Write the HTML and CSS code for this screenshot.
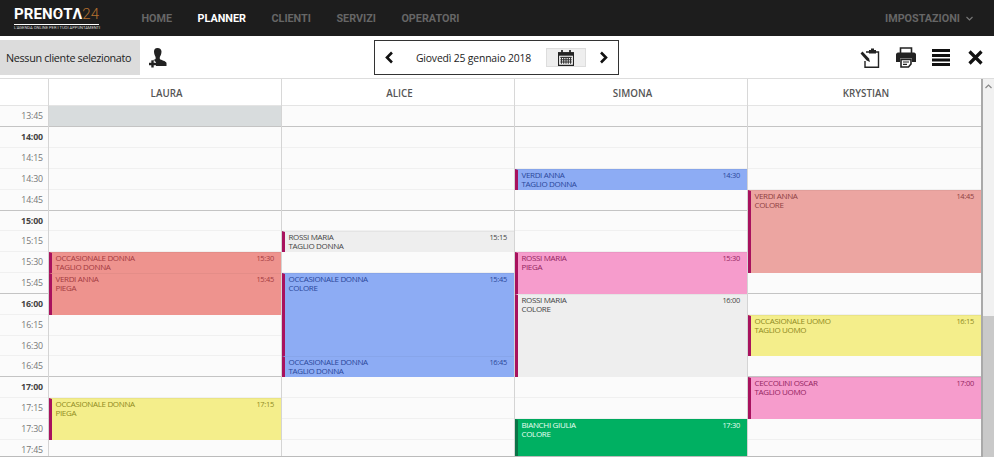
FILE: index.html
```html
<!DOCTYPE html>
<html lang="it">
<head>
    <meta charset="UTF-8">
    <meta name="viewport" content="width=device-width, initial-scale=1.0">
    <title>Prenota24 - Planner</title>
    <link rel="stylesheet" href="styles.css">
</head>
<body>
    <header class="topbar">
        <div class="logo">
            <div class="logo-name">PREN<span class="logo-o">O</span>TΛ<span class="logo-num">24</span></div>
            <div class="logo-tag">L'AGENDA ONLINE PER I TUOI APPUNTAMENTI</div>
        </div>
        <nav class="nav">
            <a>HOME</a>
            <a class="active">PLANNER</a>
            <a>CLIENTI</a>
            <a>SERVIZI</a>
            <a>OPERATORI</a>
        </nav>
        <a class="settings">IMPOSTAZIONI
            <svg width="7" height="5" viewBox="0 0 7 5"><path d="M.5 1 3.5 4 6.5 1" fill="none" stroke="#777" stroke-width="1.2"/></svg>
        </a>
    </header>

    <div class="toolbar">
        <div class="client">
            <div class="client-name">Nessun cliente selezionato</div>
            <svg class="icon" width="19" height="20" viewBox="0 0 19 20">
                <path d="M9.5 0C7 0 6 1.600 6 3.600 6 5.800 7 8 7.600 9V11C6 12 2.500 12.500 1.800 14V18H18.500V15C18 13 13 12 11.800 11V9C12.500 8 13.500 5.800 13.500 3.600 13.500 1.600 12 0 9.500 0Z" fill="#222"/>
                <path d="M4.500 12.500V19.500M1 16H8" stroke="#fff" stroke-width="4.600"/>
                <path d="M4.500 12.500V19.500M1 16H8" stroke="#222" stroke-width="2.400"/>
            </svg>
        </div>
        <div class="datebox">
            <svg width="10" height="13" viewBox="0 0 10 13"><path d="M8 1.500 3 6.500 8 11.500" fill="none" stroke="#111" stroke-width="2.600"/></svg>
            <span class="date">Giovedì 25 gennaio 2018</span>
            <button class="cal-btn">
                <svg width="16" height="16" viewBox="0 0 14 14">
                    <path d="M.5 2.500H13.500V13.500H.5Z" fill="#fff" stroke="#222"/>
                    <path d="M0 2H14V5H0Z" fill="#222"/>
                    <path d="M3.500 0V3M10.500 0V3" stroke="#222" stroke-width="1.500"/>
                    <path d="M2 6.500H12M2 8.500H12M2 10.500H12M3 6V12M5 6V12M7 6V12M9 6V12M11 6V12" stroke="#333" stroke-width="1"/>
                </svg>
            </button>
            <svg width="10" height="13" viewBox="0 0 10 13"><path d="M2 1.500 7 6.500 2 11.500" fill="none" stroke="#111" stroke-width="2.600"/></svg>
        </div>
        <div class="actions">
            <svg width="20" height="20" viewBox="0 0 20 20">
                <path d="M6 4H18.500V19.300H5V13" fill="none" stroke="#222" stroke-width="1.400"/>
                <path d="M9 4V2H11V.5H14V2H16V5.500H9Z" fill="#222"/>
                <path d="M.5 5.500 2.500 3.500 9 10.500 10 14 6.700 12.500Z" fill="#222"/>
            </svg>
            <svg width="20" height="21" viewBox="0 0 20 21">
                <path d="M4.500 6V1H15.500V6" fill="none" stroke="#222" stroke-width="1.600"/>
                <path d="M2 5.500H18C19 5.500 20 6.500 20 7.500V15H16V11.500H4V15H0V7.500C0 6.500 1 5.500 2 5.500Z" fill="#222"/>
                <path d="M5 12.500H15V17L12.500 20H5Z" fill="#fff" stroke="#222" stroke-width="1.600"/>
                <path d="M7 15H13M7 17.300H11" stroke="#222" stroke-width="1.200"/>
            </svg>
            <svg width="18" height="17" viewBox="0 0 18 17">
                <path d="M0 1.500H18M0 6.500H18M0 11H18M0 15.500H18" stroke="#111" stroke-width="3"/>
            </svg>
            <svg class="close" width="15" height="15" viewBox="0 0 15 15">
                <path d="M1.500 1.500 13.500 13.500M13.500 1.500 1.500 13.500" stroke="#111" stroke-width="3.200"/>
            </svg>
        </div>
    </div>

    <div class="board">
        <div class="board-main">
            <div class="head">
                <div></div>
                <div class="head-cell">LAURA</div>
                <div class="head-cell">ALICE</div>
                <div class="head-cell">SIMONA</div>
                <div class="head-cell">KRYSTIAN</div>
            </div>
            <div class="calendar">
                <div class="slots">
                    <div class="slot"><span class="time">13:45</span></div>
                    <div class="slot hour"><span class="time">14:00</span></div>
                    <div class="slot"><span class="time">14:15</span></div>
                    <div class="slot"><span class="time">14:30</span></div>
                    <div class="slot"><span class="time">14:45</span></div>
                    <div class="slot hour"><span class="time">15:00</span></div>
                    <div class="slot"><span class="time">15:15</span></div>
                    <div class="slot"><span class="time">15:30</span></div>
                    <div class="slot"><span class="time">15:45</span></div>
                    <div class="slot hour"><span class="time">16:00</span></div>
                    <div class="slot"><span class="time">16:15</span></div>
                    <div class="slot"><span class="time">16:30</span></div>
                    <div class="slot"><span class="time">16:45</span></div>
                    <div class="slot hour"><span class="time">17:00</span></div>
                    <div class="slot"><span class="time">17:15</span></div>
                    <div class="slot"><span class="time">17:30</span></div>
                    <div class="slot"><span class="time">17:45</span></div>
                </div>

                <div class="col-line laura"></div>
                <div class="col-line alice"></div>
                <div class="col-line simona"></div>
                <div class="col-line krystian"></div>

                <div class="closed laura r1"></div>

                <div class="event red laura r8 s1">
                    <div>OCCASIONALE DONNA<br>TAGLIO DONNA</div><span class="at">15:30</span>
                </div>
                <div class="event red laura r9 s2">
                    <div>VERDI ANNA<br>PIEGA</div><span class="at">15:45</span>
                </div>
                <div class="event yellow laura r15 s2">
                    <div>OCCASIONALE DONNA<br>PIEGA</div><span class="at">17:15</span>
                </div>

                <div class="event grey alice r7 s1">
                    <div>ROSSI MARIA<br>TAGLIO DONNA</div><span class="at">15:15</span>
                </div>
                <div class="event blue alice r9 s4">
                    <div>OCCASIONALE DONNA<br>COLORE</div><span class="at">15:45</span>
                </div>
                <div class="event blue alice r13 s1">
                    <div>OCCASIONALE DONNA<br>TAGLIO DONNA</div><span class="at">16:45</span>
                </div>

                <div class="event blue simona r4 s1">
                    <div>VERDI ANNA<br>TAGLIO DONNA</div><span class="at">14:30</span>
                </div>
                <div class="event pink simona r8 s2">
                    <div>ROSSI MARIA<br>PIEGA</div><span class="at">15:30</span>
                </div>
                <div class="event grey simona r10 s4">
                    <div>ROSSI MARIA<br>COLORE</div><span class="at">16:00</span>
                </div>
                <div class="event green simona r16 s2">
                    <div>BIANCHI GIULIA<br>COLORE</div><span class="at">17:30</span>
                </div>

                <div class="event salmon krystian r5 s4">
                    <div>VERDI ANNA<br>COLORE</div><span class="at">14:45</span>
                </div>
                <div class="event yellow krystian r11 s2">
                    <div>OCCASIONALE UOMO<br>TAGLIO UOMO</div><span class="at">16:15</span>
                </div>
                <div class="event pink krystian r14 s2">
                    <div>CECCOLINI OSCAR<br>TAGLIO UOMO</div><span class="at">17:00</span>
                </div>
            </div>
        </div>
        <div class="scrollbar">
            <svg class="scroll-up" width="7" height="5" viewBox="0 0 7 5"><path d="M.5 4 3.500 1 6.500 4" fill="none" stroke="#888" stroke-width="1.200"/></svg>
            <div class="scroll-thumb"></div>
        </div>
    </div>
</body>
</html>
```

FILE: styles.css
```css
html, body {
    margin: 0;
    padding: 0;
    height: 457px;
    overflow: hidden;
}
body {
    font-family: 'Open Sans', 'Liberation Sans', sans-serif;
    background-color: #ffffff;
    color: #333;
    display: flex;
    flex-direction: column;
}

/* top bar */
.topbar {
    flex: none;
    height: 36px;
    background: #1d1d1d;
    display: flex;
    align-items: center;
    font-family: Roboto, 'Liberation Sans', sans-serif;
    font-weight: 700;
    font-size: 10.8px;
    color: #666;
}
.logo {
    width: 127px;
    padding-left: 14px;
    box-sizing: border-box;
    color: #fff;
}
.logo-name {
    width: 85px;
    font-size: 15px;
    line-height: 15px;
    letter-spacing: .1px;
    border-bottom: 1px solid #fff;
    padding-bottom: 2px;
    white-space: nowrap;
    margin-top: 1px;
}
.logo-o {
    position: relative;
}
.logo-o::after {
    content: "";
    position: absolute;
    left: 5px;
    top: 7px;
    width: 3px;
    height: 1px;
    background: #c77a30;
}
.logo-num {
    color: #b5702f;
    font-weight: 300;
}
.logo-tag {
    width: 85px;
    font-size: 4.1px;
    line-height: 6px;
    font-weight: 400;
    white-space: nowrap;
    color: #ddd;
}
.nav {
    display: flex;
    gap: 25.5px;
    margin-left: 14.5px;
}
.nav .active {
    color: #fff;
}
.settings {
    margin-left: auto;
    margin-right: 21px;
    display: flex;
    align-items: center;
    gap: 6px;
}

/* toolbar */
.toolbar {
    flex: none;
    height: 43px;
    box-sizing: border-box;
    display: grid;
    grid-template-columns: 374px 245px 1fr;
    align-items: center;
    border-bottom: 1px solid #dddddd;
    padding: 4px 0 3px;
}
.client {
    display: flex;
    align-items: center;
    gap: 8px;
}
.client-name {
    width: 140px;
    height: 35px;
    box-sizing: border-box;
    background: #dcdcdc;
    font-size: 10.8px;
    letter-spacing: -.33px;
    line-height: 35px;
    padding-left: 6px;
    white-space: nowrap;
    color: #222;
}
.datebox {
    height: 35px;
    box-sizing: border-box;
    border: 1px solid #333;
    display: flex;
    align-items: center;
    padding: 0 9px;
}
.date {
    font-size: 10.4px;
    letter-spacing: -.17px;
    margin-left: 22px;
    width: 131px;
    white-space: nowrap;
    color: #222;
}
.cal-btn {
    width: 40px;
    height: 19px;
    padding: 0;
    margin-right: 13px;
    background: #eeeeee;
    border: 1px solid #dddddd;
    display: flex;
    align-items: center;
    justify-content: center;
}
.actions {
    display: flex;
    align-items: center;
    justify-content: flex-end;
    gap: 16px;
    padding-right: 11px;
}
.close {
    margin-left: 2px;
}

/* board */
.board {
    flex: 1;
    display: flex;
    min-height: 0;
}
.board-main {
    width: 981px;
    display: flex;
    flex-direction: column;
    border-bottom: 1px solid #bbb;
    box-sizing: border-box;
}
.head {
    flex: none;
    height: 27.4px;
    box-sizing: border-box;
    display: grid;
    grid-template-columns: 48px 233px 233px 233px 234px;
    border-bottom: 1px solid #e4e4e4;
    background: #fff;
}
.head-cell {
    border-left: 1px solid #d8d8d8;
    padding-left: 3px;
    text-align: center;
    font-size: 9.8px;
    font-weight: 600;
    line-height: 29px;
    color: #555;
}
.calendar {
    flex: 1;
    min-height: 0;
    overflow: hidden;
    display: grid;
    grid-template-columns: 48px 233px 233px 233px 234px;
    grid-template-rows: repeat(17, 20.83px);
    background: #fbfbfb;
}
.slots {
    grid-column: 1 / -1;
    grid-row: 1 / -1;
    display: grid;
    grid-template-rows: subgrid;
}
.slot {
    box-sizing: border-box;
    border-bottom: 1px solid #f0f0f0;
    display: flex;
}
.slot:has(+ .hour) {
    border-bottom-color: #c4c4c4;
}
.time {
    width: 43px;
    text-align: right;
    font-size: 8.8px;
    letter-spacing: -.15px;
    line-height: 21px;
    color: #777;
}
.hour .time {
    font-weight: 700;
    color: #444;
}
.col-line {
    grid-row: 1 / -1;
    border-left: 1px solid #d4d4d4;
}
.laura { grid-column: 2; }
.alice { grid-column: 3; }
.simona { grid-column: 4; }
.krystian { grid-column: 5; }

.closed {
    margin-left: 1px;
    margin-bottom: 1px;
    background: #d8dcdd;
}

/* appointments */
.event {
    margin-left: 1px;
    box-sizing: border-box;
    border-left: 3px solid #a8125e;
    border-top: 1px solid rgba(0, 0, 0, .04);
    padding: 0 7px 0 3.5px;
    display: flex;
    justify-content: space-between;
    align-items: flex-start;
    font-size: 8px;
    letter-spacing: -.34px;
    line-height: 9px;
    white-space: nowrap;
    overflow: hidden;
}
.at {
    margin-top: 1px;
    font-size: 7.4px;
    letter-spacing: -.25px;
}
.r1 { grid-row: 1; }
.r4 { grid-row-start: 4; }
.r5 { grid-row-start: 5; }
.r7 { grid-row-start: 7; }
.r8 { grid-row-start: 8; }
.r9 { grid-row-start: 9; }
.r10 { grid-row-start: 10; }
.r11 { grid-row-start: 11; }
.r13 { grid-row-start: 13; }
.r14 { grid-row-start: 14; }
.r15 { grid-row-start: 15; }
.r16 { grid-row-start: 16; }
.s1 { grid-row-end: span 1; }
.s2 { grid-row-end: span 2; }
.s4 { grid-row-end: span 4; }

.red { background: #ee938e; color: #a33a3f; }
.salmon { background: #eca5a1; color: #8e3f42; }
.yellow { background: #f4ee8b; color: #8f8a1e; }
.grey { background: #eeeeee; color: #444; }
.blue { background: #8dacf4; color: #2a479a; }
.pink { background: #f69ccc; color: #93245f; }
.green { background: #00b062; color: #e8fff2; border-left-color: #0b7447; }

/* scrollbar */
.scrollbar {
    flex: 1;
    box-sizing: border-box;
    background: #f1f1f1;
    border-left: 2px solid #a9a9a9;
    display: flex;
    flex-direction: column;
    align-items: center;
}
.scroll-up {
    margin-top: 5px;
}
.scroll-thumb {
    margin-top: auto;
    width: 100%;
    height: 141px;
    background: #c9c9c9;
}
```
